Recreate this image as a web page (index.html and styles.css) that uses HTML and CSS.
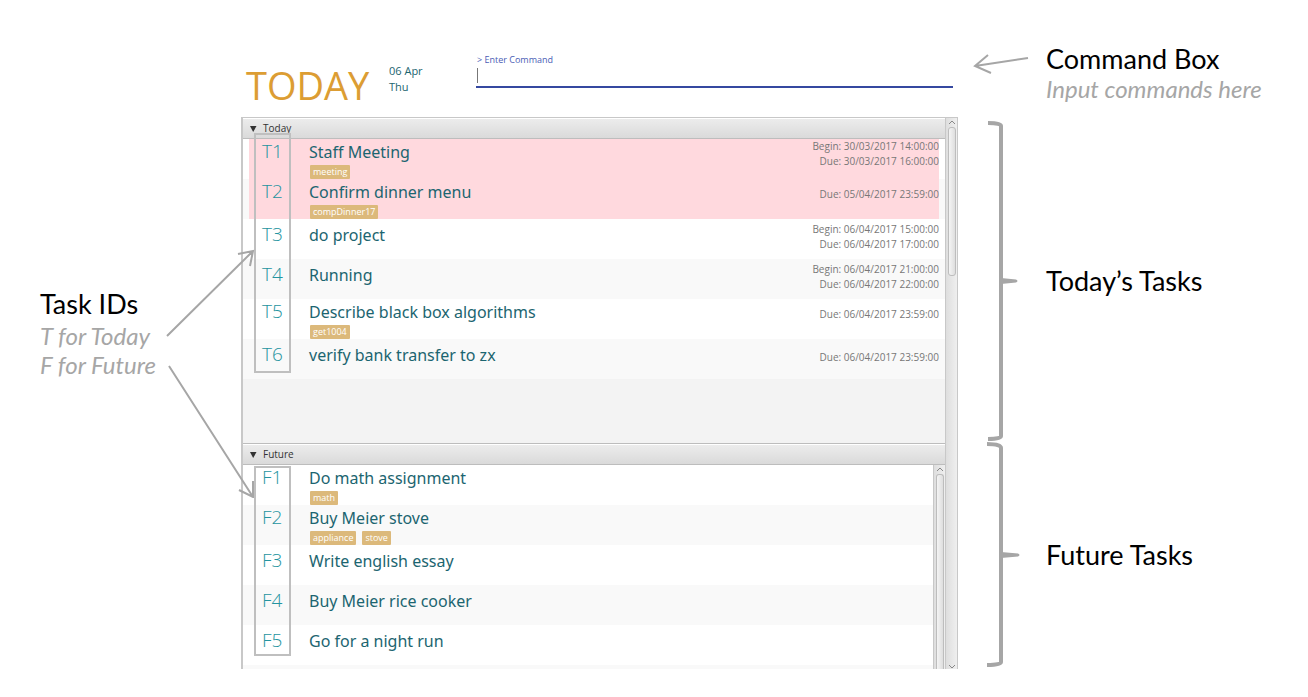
FILE: index.html
```html
<!DOCTYPE html>
<html lang="en">
<head>
<meta charset="utf-8">
<title>Task manager guide</title>
<link rel="stylesheet" href="styles.css">
</head>
<body>
<div class="guide">
  <aside class="notes-left">
    <h2 class="note-title">Task IDs</h2>
    <p class="note-text">T for Today<br>F for Future</p>
    <svg class="id-arrows" width="96" height="256" viewBox="0 0 96 256" aria-hidden="true">
      <path d="M7 94 93 9M78 12 93 9 90 24M9 124 93 255M79 248 93 255V239"/>
    </svg>
  </aside>

  <main class="app">
    <header class="top">
      <h1 class="heading">TODAY</h1>
      <p class="date">06 Apr<br>Thu</p>
      <div class="command">
        <label class="command-label" for="command">&gt; Enter Command</label>
        <input class="command-input" id="command" type="text">
        <span class="caret"></span>
      </div>
    </header>

    <div class="panel">
      <div class="sections">
        <section class="section today">
          <button class="section-head" type="button"><svg width="8" height="6" viewBox="0 0 8 6" aria-hidden="true"><path d="M1 0H7.500L4.200 6Z"/></svg>Today</button>
          <ul class="tasks">
            <li class="task tagged overdue"><div class="cell"><span class="id">T1</span><div class="info"><span class="name">Staff Meeting</span><span class="tags"><span class="tag">meeting</span></span></div><span class="time">Begin: 30/03/2017 14:00:00<br>Due: 30/03/2017 16:00:00</span></div></li>
            <li class="task tagged overdue"><div class="cell"><span class="id">T2</span><div class="info"><span class="name">Confirm dinner menu</span><span class="tags"><span class="tag">compDinner17</span></span></div><span class="time">Due: 05/04/2017 23:59:00</span></div></li>
            <li class="task"><div class="cell"><span class="id">T3</span><div class="info"><span class="name">do project</span></div><span class="time">Begin: 06/04/2017 15:00:00<br>Due: 06/04/2017 17:00:00</span></div></li>
            <li class="task"><div class="cell"><span class="id">T4</span><div class="info"><span class="name">Running</span></div><span class="time">Begin: 06/04/2017 21:00:00<br>Due: 06/04/2017 22:00:00</span></div></li>
            <li class="task tagged"><div class="cell"><span class="id">T5</span><div class="info"><span class="name">Describe black box algorithms</span><span class="tags"><span class="tag">get1004</span></span></div><span class="time">Due: 06/04/2017 23:59:00</span></div></li>
            <li class="task"><div class="cell"><span class="id">T6</span><div class="info"><span class="name">verify bank transfer to zx</span></div><span class="time">Due: 06/04/2017 23:59:00</span></div></li>
          </ul>
          <div class="id-frame"></div>
        </section>
        <section class="section future">
          <button class="section-head" type="button"><svg width="8" height="6" viewBox="0 0 8 6" aria-hidden="true"><path d="M1 0H7.500L4.200 6Z"/></svg>Future</button>
          <div class="scroll-area">
            <ul class="tasks">
              <li class="task tagged"><div class="cell"><span class="id">F1</span><div class="info"><span class="name">Do math assignment</span><span class="tags"><span class="tag">math</span></span></div></div></li>
              <li class="task tagged"><div class="cell"><span class="id">F2</span><div class="info"><span class="name">Buy Meier stove</span><span class="tags"><span class="tag">appliance</span><span class="tag">stove</span></span></div></div></li>
              <li class="task"><div class="cell"><span class="id">F3</span><div class="info"><span class="name">Write english essay</span></div></div></li>
              <li class="task"><div class="cell"><span class="id">F4</span><div class="info"><span class="name">Buy Meier rice cooker</span></div></div></li>
              <li class="task"><div class="cell"><span class="id">F5</span><div class="info"><span class="name">Go for a night run</span></div></div></li>
              <li class="task-edge"></li>
            </ul>
            <div class="scrollbar inner">
              <svg class="chevron" width="8" height="5" viewBox="0 0 8 5" aria-hidden="true"><path d="M1 4 4 1 7 4"/></svg>
              <div class="thumb"></div>
            </div>
          </div>
          <div class="id-frame"></div>
        </section>
      </div>
      <div class="scrollbar outer">
        <svg class="chevron" width="8" height="5" viewBox="0 0 8 5" aria-hidden="true"><path d="M1 4 4 1 7 4"/></svg>
        <div class="thumb"></div>
        <svg class="chevron" width="8" height="5" viewBox="0 0 8 5" aria-hidden="true"><path d="M1 1 4 4 7 1"/></svg>
      </div>
    </div>
  </main>

  <aside class="notes-right">
    <div class="callout command-note">
      <svg class="mark arrow" width="60" height="24" viewBox="0 0 60 24" aria-hidden="true"><path d="M55 6 2 14M15 3 2 14 18 21"/></svg>
      <div>
        <h2 class="note-title">Command Box</h2>
        <p class="note-text">Input commands here</p>
      </div>
    </div>
    <div class="callout today-note">
      <svg class="mark brace" width="36" height="322" viewBox="0 0 36 322" aria-hidden="true"><path d="M2 3Q15 3 15 6V316Q15 319 2 319"/><path class="tip" d="M15 158 30 159.500Q33 161 30 162.500L15 164Z"/></svg>
      <h2 class="note-title">Today’s Tasks</h2>
    </div>
    <div class="callout future-note">
      <svg class="mark brace" width="36" height="226" viewBox="0 0 36 226" aria-hidden="true"><path d="M1 2Q15 2 15 6V220Q15 223 1 223"/><path class="tip" d="M15 110 32 111.500Q35 113 32 114.500L15 116Z"/></svg>
      <h2 class="note-title">Future Tasks</h2>
    </div>
  </aside>
</div>
</body>
</html>
```
FILE: styles.css
```css
* { box-sizing: border-box; }

body {
  margin: 0;
  background: #fff;
  font-family: "Open Sans", "Noto Sans", sans-serif;
}

h1, h2, p, ul { margin: 0; padding: 0; font-weight: 400; }
ul { list-style: none; }

.guide {
  display: grid;
  grid-template-columns: 241px minmax(0, 1fr) 350px;
}

/* Annotations */
.note-title {
  font: 27px/30px Lato, sans-serif;
  color: #000;
}
.note-text {
  font: italic 24px/29px Lato, sans-serif;
  color: #a6a6a6;
}
.notes-left {
  position: relative;
  padding: 289px 0 0 40px;
}
.notes-left .note-text { padding-top: 2px; }
.id-arrows {
  position: absolute;
  z-index: 2;
  left: 160px;
  top: 242px;
}
.id-arrows path, .arrow path {
  fill: none;
  stroke: #a6a6a6;
  stroke-width: 2;
}
.notes-right { padding-top: 43px; }
.callout { display: flex; align-items: center; }
.mark { flex: none; }
.arrow { margin: 0 13px 18px 15px; }
.command-note { height: 60px; }
.brace { margin: 0 24px 0 28px; }
.brace path {
  fill: none;
  stroke: #a6a6a6;
  stroke-width: 4;
}
.brace .tip { fill: #a6a6a6; stroke: none; }
.today-note { margin-top: 17px; }

/* Header */
.top {
  display: flex;
  height: 117px;
  padding: 53px 5px 0 5px;
}
.heading {
  width: 143px;
  font-size: 38px;
  line-height: 64px;
  color: #dc9d33;
}
.date {
  width: 87px;
  padding-top: 10px;
  font-size: 11px;
  line-height: 16px;
  color: #1c6570;
}
.command { position: relative; flex: 1; }
.command-label {
  display: block;
  padding-left: 1px;
  font-size: 9px;
  line-height: 14px;
  color: #4a5db5;
}
.command-input {
  display: block;
  width: 100%;
  height: 21px;
  border: 0;
  border-bottom: 2px solid #3548a0;
  outline: 0;
  padding: 0;
}
.caret {
  position: absolute;
  left: 1px;
  top: 15px;
  width: 1px;
  height: 15px;
  background: #777;
}

/* Task panel */
.panel {
  display: flex;
  border: 2px solid #c8c8c8;
  border-width: 1px 1px 0 2px;
}
.sections { flex: 1; min-width: 0; }
.section { position: relative; }
.section-head {
  display: flex;
  align-items: center;
  gap: 6px;
  width: 100%;
  height: 21px;
  padding: 0 6px;
  border: 0;
  border-top: 1px solid #fff;
  border-bottom: 1px solid #bdbdbd;
  background: linear-gradient(#ececec, #dadada);
  font: 10px/19px "Open Sans", "Noto Sans", sans-serif;
  color: #333;
}
.section-head svg { fill: #333; }
.today { height: 326px; background: #f3f3f3; border-bottom: 1px solid #bdbdbd; }
.task { height: 40px; padding: 0 6px; background: #fff; }
.task:nth-child(even), .task-edge { background: #f9f9f9; }
.task-edge { height: 4px; }
.cell {
  display: flex;
  height: 40px;
  padding-left: 13px;
  align-items: flex-start;
}
.overdue .cell { background: #ffd9de; }
.id {
  width: 47px;
  padding-top: 3px;
  font-size: 19px;
  font-weight: 300;
  line-height: 24px;
  color: #2494a0;
}
.info { flex: 1; padding-top: 3px; }
.name {
  display: block;
  font-family: "Noto Sans", "Open Sans", sans-serif;
  font-size: 16px;
  line-height: 26px;
  color: #1c6570;
}
.tagged .id { padding-top: 0; }
.tagged .info { padding-top: 0; }
.tags { display: flex; gap: 6px; padding-left: 1px; }
.tag {
  height: 14px;
  padding: 0 3px;
  border-radius: 1px;
  background: #dcb97b;
  font-size: 9px;
  line-height: 14px;
  color: #fff;
}
.time {
  align-self: center;
  padding-bottom: 4px;
  font-size: 10px;
  line-height: 15px;
  text-align: right;
  color: #777;
}
.tagged .time { padding-bottom: 10px; }
.id-frame {
  position: absolute;
  z-index: 1;
  left: 11px;
  top: 15px;
  width: 37px;
  height: 240px;
  border: 2px solid #bfbfbf;
}
.future .id-frame { top: 22px; height: 190px; }

/* Scrollbars */
.scroll-area { display: flex; }
.scroll-area .tasks { flex: 1; }
.scrollbar {
  display: flex;
  flex-direction: column;
  align-items: center;
  width: 12px;
  padding-top: 2px;
  border-left: 1px solid #c8c8c8;
  background: linear-gradient(90deg, #dedede, #efefef);
}
.thumb {
  width: 8px;
  margin-top: 2px;
  border: 1px solid #bdbdbd;
  border-radius: 3px;
  background: linear-gradient(90deg, #f4f4f4, #dedede);
}
.outer .thumb { height: 149px; margin-bottom: auto; }
.inner .thumb { flex: 1; border-bottom: 0; border-radius: 3px 3px 0 0; }
.chevron { flex: none; }
.chevron path { fill: none; stroke: #888; stroke-width: 1; }
```
